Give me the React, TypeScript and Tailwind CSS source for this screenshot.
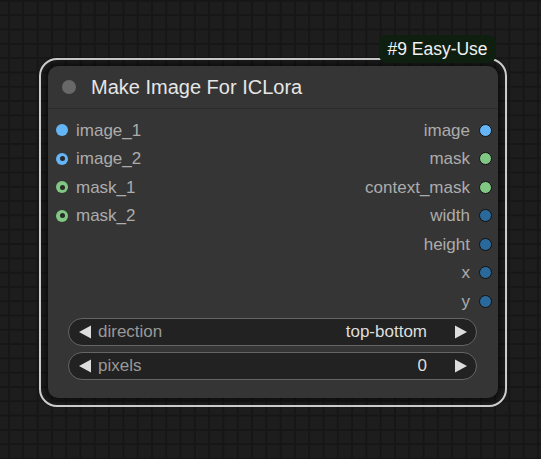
import React from "react";

type Slot = { name: string; color: string; hollow?: boolean };

const inputs: Slot[] = [
  { name: "image_1", color: "bg-[#64b5f6]" },
  { name: "image_2", color: "bg-[#64b5f6]", hollow: true },
  { name: "mask_1", color: "bg-[#81c784]", hollow: true },
  { name: "mask_2", color: "bg-[#81c784]", hollow: true },
];

const outputs: Slot[] = [
  { name: "image", color: "bg-[#64b5f6]" },
  { name: "mask", color: "bg-[#81c784]" },
  { name: "context_mask", color: "bg-[#81c784]" },
  { name: "width", color: "bg-[#29699c]" },
  { name: "height", color: "bg-[#29699c]" },
  { name: "x", color: "bg-[#29699c]" },
  { name: "y", color: "bg-[#29699c]" },
];

function LeftTri() {
  return (
    <svg width="14" height="14" viewBox="0 0 14 14" className="shrink-0">
      <polygon points="13,0.5 13,13.5 1,7" fill="#dddddd" />
    </svg>
  );
}
function RightTri() {
  return (
    <svg width="14" height="14" viewBox="0 0 14 14" className="shrink-0">
      <polygon points="1,0.5 1,13.5 13,7" fill="#dddddd" />
    </svg>
  );
}

function Widget({ label, value }: { label: string; value: string }) {
  return (
    <div className="flex items-center h-[28px] rounded-full border border-[#656565] bg-[#222222] pl-[9px] pr-[8px]">
      <LeftTri />
      <span className="ml-[6px] text-[#999999]">{label}</span>
      <span className="ml-auto text-[#dddddd]">{value}</span>
      <span className="ml-[27px]">
        <RightTri />
      </span>
    </div>
  );
}

export default function App() {
  return (
    <div
      className="relative w-[541px] h-[459px] overflow-hidden bg-[#1d1d1d] bg-[linear-gradient(to_right,#161616_2px,transparent_2px),linear-gradient(to_bottom,#161616_2px,transparent_2px)] bg-[size:14.3px_14.3px] bg-[position:8px_0px]"
      style={{ fontFamily: '"Liberation Sans", Arial, sans-serif' }}
    >
      {/* node with selection outline */}
      <div className="absolute left-[39px] top-[58px] w-[468px] h-[349px] rounded-[18px] border-2 border-[#d2d2d2] pt-[6px] px-[7px] pb-[7px]">
        <div className="h-[332px] rounded-[10px] bg-[#353535] shadow-[0_0_6px_3px_rgba(0,0,0,0.55)] flex flex-col">
          {/* title */}
          <div className="h-[43px] shrink-0 flex items-center border-b border-[#2b2b2b]">
            <div className="ml-[14px] w-[14px] h-[14px] rounded-full bg-[#686868]" />
            <span className="ml-[15px] text-[20px] text-[#e6e6e6]">Make Image For ICLora</span>
          </div>
          {/* slots */}
          <div className="flex justify-between pt-[7px] text-[17px] text-[#acacac]">
            <div className="flex flex-col pl-[8px]">
              {inputs.map((s) => (
                <div key={s.name} className="h-[28.5px] flex items-center">
                  <div className={`w-[12px] h-[12px] rounded-full ${s.color} flex items-center justify-center`}>
                    {s.hollow && <div className="w-[5px] h-[5px] rounded-full bg-[#2a2a2a]" />}
                  </div>
                  <span className="ml-[8px]">{s.name}</span>
                </div>
              ))}
            </div>
            <div className="flex flex-col items-end pr-[6px]">
              {outputs.map((s) => (
                <div key={s.name} className="h-[28.5px] flex items-center">
                  <span className="mr-[9px]">{s.name}</span>
                  <div className={`w-[13px] h-[13px] rounded-full border border-[#111111] ${s.color}`} />
                </div>
              ))}
            </div>
          </div>
          {/* widgets */}
          <div className="mt-[2.5px] flex flex-col gap-[6px] pl-[20px] pr-[21px] text-[17px]">
            <Widget label="direction" value="top-bottom" />
            <Widget label="pixels" value="0" />
          </div>
        </div>
      </div>
      {/* badge */}
      <div className="absolute left-[379px] top-[35px] w-[117px] h-[28px] rounded-[8px] bg-[#0e1f10] flex items-center justify-center text-[17.5px] text-[#f2f2f2]">
        #9 Easy-Use
      </div>
    </div>
  );
}
